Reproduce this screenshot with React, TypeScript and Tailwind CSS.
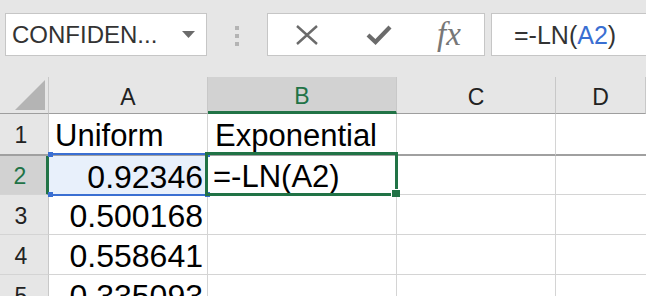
import React from "react";

const rows = [
  { n: "1", a: "Uniform", b: "Exponential" },
  { n: "2", a: "0.92346", b: "=-LN(A2)" },
  { n: "3", a: "0.500168", b: "" },
  { n: "4", a: "0.558641", b: "" },
  { n: "5", a: "0.335093", b: "" },
];

const cols = ["A", "B", "C", "D"];

export default function App() {
  return (
    <div className="w-[646px] h-[296px] overflow-hidden bg-white font-['Liberation_Sans',Arial,sans-serif]">
      {/* Formula bar */}
      <div className="h-[77px] bg-[#e6e6e6] flex items-start pt-[13px] pl-[5px] overflow-hidden">
        <div className="shrink-0 w-[202px] h-[43px] bg-white border border-[#c6c6c6] flex items-center justify-between pl-[6px] pr-[11px]">
          <span className="text-[24px] text-[#333] leading-none pt-[1px]">CONFIDEN...</span>
          <svg width="13" height="7" viewBox="0 0 13 7">
            <path d="M0 0 L13 0 L6.5 7 Z" fill="#6b6b6b" />
          </svg>
        </div>
        <div className="shrink-0 w-[60px] h-[43px] flex flex-col items-center justify-center gap-[4px] pt-[2px]">
          <div className="w-[4px] h-[4px] bg-[#b4b4b4]" />
          <div className="w-[4px] h-[4px] bg-[#b4b4b4]" />
          <div className="w-[4px] h-[4px] bg-[#b4b4b4]" />
        </div>
        <div className="shrink-0 w-[218px] h-[43px] bg-white border border-[#c6c6c6] flex items-center">
          <div className="w-[72px] flex justify-center pl-[6px]">
            <svg width="24" height="22" viewBox="0 0 24 22">
              <path d="M2 2 L22 20 M22 2 L2 20" stroke="#6b6b6b" strokeWidth="2.4" />
            </svg>
          </div>
          <div className="w-[72px] flex justify-center pl-[6px]">
            <svg width="26" height="20" viewBox="0 0 26 20">
              <path d="M2 10 L9.5 17 L24 2" stroke="#6b6b6b" strokeWidth="4.2" fill="none" />
            </svg>
          </div>
          <div className="w-[72px] flex justify-center pl-[2px]">
            <span className="font-['Liberation_Serif',serif] italic text-[33px] text-[#777] leading-none">fx</span>
          </div>
        </div>
        <div className="shrink-0 ml-[6px] w-[200px] h-[43px] bg-white border border-[#c6c6c6] flex items-center pl-[22px]">
          <span className="text-[25px] text-[#333] leading-none pt-[1px]">
            =-LN(<span className="text-[#3a6fd2]">A2</span>)
          </span>
        </div>
      </div>

      {/* Grid */}
      <div className="grid grid-cols-[49px_159px_189px_159px_1fr]">
        {/* Column header row */}
        <div className="h-[37px] bg-[#e6e6e6] border-r border-b border-[#c8c8c8] border-b-[#9e9e9e] flex items-end justify-end pr-[3px] pb-[3px]">
          <svg width="30" height="30" viewBox="0 0 30 30">
            <path d="M30 0 L30 30 L0 30 Z" fill="#b4b4b4" />
          </svg>
        </div>
        {cols.map((c) =>
          c === "B" ? (
            <div
              key={c}
              className="h-[37px] bg-[#d2d2d2] border-r border-[#c8c8c8] border-b-[3px] border-b-[#217346] flex items-center justify-center text-[23px] text-[#217346] pt-[5px]"
            >
              {c}
            </div>
          ) : (
            <div
              key={c}
              className="h-[37px] bg-[#e6e6e6] border-r border-b border-[#c8c8c8] border-b-[#9e9e9e] flex items-center justify-center text-[23px] text-[#222] pt-[4px]"
            >
              {c}
            </div>
          )
        )}

        {rows.map((r, i) => {
          const first = i === 0;
          const active = i === 1;
          const h = first ? "h-[42px] border-b-2 border-b-[#a0a0a0]" : i === 1 ? "h-[39px] border-b border-b-[#d4d4d4]" : "h-[40px] border-b border-b-[#d4d4d4]";
          return (
            <React.Fragment key={r.n}>
              <div
                className={`${h} ${
                  active ? "bg-[#d2d2d2] text-[#217346] border-r-[3px] border-r-[#217346]" : "bg-[#e6e6e6] text-[#222] border-r border-r-[#c8c8c8]"
                } flex items-center justify-center pr-[6px] text-[23px] pt-[3px]`}
              >
                {r.n}
              </div>
              <div
                className={`${h} ${active ? "bg-[#e8f0fb] relative" : ""} border-r border-r-[#d4d4d4] flex items-center text-black leading-none ${
                  first ? "justify-start pl-[6px] text-[31px]" : "justify-end pr-[4px] text-[32px]"
                }`}
              >
                <span className="pt-[3px]">{r.a}</span>
                {active && (
                  <>
                    <div className="absolute left-0 right-0 top-[-3px] h-[2px] bg-[#3a6fd2]" />
                    <div className="absolute left-0 right-0 bottom-[-2px] h-[2px] bg-[#3a6fd2]" />
                    <div className="absolute left-[-1px] top-[-4px] w-[5px] h-[5px] bg-[#3a6fd2]" />
                    <div className="absolute left-[-1px] bottom-[-3px] w-[5px] h-[5px] bg-[#3a6fd2]" />
                    <div className="absolute right-[-3px] top-[-4px] w-[5px] h-[5px] bg-[#3a6fd2]" />
                    <div className="absolute right-[-3px] bottom-[-3px] w-[5px] h-[5px] bg-[#3a6fd2]" />
                  </>
                )}
              </div>
              <div
                className={`${h} ${active ? "relative z-10" : ""} border-r border-r-[#d4d4d4] flex items-center text-[31px] text-black leading-none ${
                  first ? "pl-[7px]" : "pl-[5px]"
                }`}
              >
                <span className="pt-[3px]">{r.b}</span>
                {active && (
                  <>
                    <div className="absolute left-[-3px] right-[-2px] top-[-4px] bottom-[-2px] border-[3px] border-[#217346]" />
                    <div className="absolute right-[-4px] bottom-[-3px] w-[9px] h-[8px] bg-[#217346] border-l border-t border-white" />
                  </>
                )}
              </div>
              <div className={`${h} border-r border-r-[#d4d4d4]`} />
              <div className={`${h}`} />
            </React.Fragment>
          );
        })}
      </div>
    </div>
  );
}
